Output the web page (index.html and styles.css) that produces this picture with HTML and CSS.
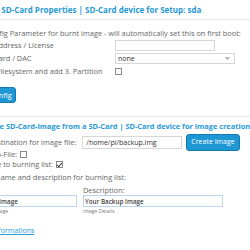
FILE: index.html
```html
<!DOCTYPE html>
<html lang="en">

<head>
	<meta charset="utf-8">
	<meta name="viewport" content="width=device-width, initial-scale=1">
	<link rel="stylesheet" href="styles.css">
</head>

<body>
	<div class="page">
		<section class="panel">
			<h2 class="panel-title">Define SD-Card Properties | SD-Card device for Setup: sda</h2>
			<div class="panel-body">
				<p class="intro">Set Config Parameter for burnt image - will automatically set this on first boot:</p>
				<div class="form-grid">
					<label for="email">Email Address / License</label>
					<input type="text" id="email" class="field">
					<label for="dac">Soundcard / DAC</label>
					<span class="select-wrap">
						<select id="dac" class="field select">
							<option>none</option>
						</select>
					</span>
					<label for="resize">Resize Filesystem and add 3. Partition</label>
					<span><input type="checkbox" id="resize" class="check"></span>
				</div>
				<button type="button" class="btn btn-save">Set Config</button>
			</div>
		</section>

		<section class="panel">
			<h2 class="panel-title">Create SD-Card-Image from a SD-Card | SD-Card device for image creation</h2>
			<div class="panel-body second">
				<div class="line line-first">
					<label for="dest">The Destination for image file:</label>
					<input type="text" id="dest" class="field" value="/home/pi/backup.img">
					<button type="button" class="btn btn-create">Create Image</button>
				</div>
				<div class="line">
					<label for="zip">New Zip-File:</label>
					<input type="checkbox" id="zip" class="check">
				</div>
				<div class="line">
					<label for="addlist">Save file to burning list:</label>
					<input type="checkbox" id="addlist" class="check" checked>
				</div>
				<p class="line line-text">Image name and description for burning list:</p>
				<div class="name-row">
					<div class="name-col">
						<label for="iname">Name:</label>
						<input type="text" id="iname" class="field field-blue" value="Backup Image">
						<small>Set Your Image</small>
					</div>
					<div class="name-col">
						<label for="idesc">Description:</label>
						<input type="text" id="idesc" class="field field-blue" value="Your Backup Image">
						<small>Image Details</small>
					</div>
				</div>
			</div>
		</section>

		<a class="more" href="#">More Informations</a>
	</div>
</body>

</html>
```

FILE: styles.css
```css
* {
	box-sizing: border-box;
}

html,
body {
	margin: 0;
	padding: 0;
	overflow: hidden;
	background-color: #ffffff;
}

body {
	font-family: "Open Sans", "Liberation Sans", sans-serif;
	font-size: 7.4px;
	line-height: 12px;
	color: #666666;
}

.page {
	width: 430px;
	margin-left: -27px;
}

.panel {
	border-bottom: 1px solid #e6e6e6;
}

.panel + .panel {
	border-bottom: none;
}

.panel-title {
	margin: 0;
	padding: 4px 0 3px 0;
	font-size: 8px;
	line-height: 12px;
	font-weight: 700;
	color: #2799d6;
	border-bottom: 1px solid #e6e6e6;
}

.panel + .panel .panel-title {
	padding: 3px 0 0 6.5px;
	font-size: 7.4px;
	border-bottom: none;
}

.panel-body {
	padding: 7px 0 13px 0;
}

.intro {
	margin: 0;
}

.form-grid {
	display: grid;
	grid-template-columns: 142px auto;
	grid-auto-rows: 12px;
	row-gap: 1px;
	align-items: center;
	margin-bottom: 10px;
}

.form-grid > span {
	display: flex;
	align-items: center;
}

.field {
	height: 11px;
	width: 100px;
	padding: 0 3px;
	border: 1px solid #d6d6d6;
	border-radius: 0;
	font-family: inherit;
	font-size: 7px;
	color: #333333;
	background: #ffffff;
	outline: none;
}

.select-wrap {
	position: relative;
	width: 120px;
}

.select {
	width: 120px;
	-webkit-appearance: none;
	appearance: none;
	padding: 0 2px;
	line-height: 9px;
}

.select-wrap::after {
	content: "";
	position: absolute;
	right: 6px;
	top: 3px;
	width: 2px;
	height: 2px;
	border-right: 1px solid #888888;
	border-bottom: 1px solid #888888;
	transform: rotate(45deg);
}

.check {
	-webkit-appearance: none;
	appearance: none;
	position: relative;
	width: 7px;
	height: 7px;
	margin: 0;
	border: 1px solid #888888;
	background: #ffffff;
}

.check:checked::after {
	content: "";
	position: absolute;
	left: 1.5px;
	top: 0;
	width: 2px;
	height: 3.5px;
	border-right: 1px solid #333333;
	border-bottom: 1px solid #333333;
	transform: rotate(40deg);
}

.btn {
	height: 16px;
	padding: 0 3px;
	border: 1px solid #137bb0;
	border-radius: 3px;
	background-color: #1f97d4;
	color: #ffffff;
	font-family: inherit;
	font-size: 7.4px;
	line-height: 14px;
}

.btn-create {
	height: 17px;
	font-size: 7px;
	padding: 0 4px;
}

.second {
	padding: 4px 0 0 0;
}

.line {
	display: flex;
	align-items: center;
	gap: 3px;
	height: 10px;
	margin: 0;
	line-height: 10px;
}

.line-first {
	height: 12px;
	gap: 0;
	margin-bottom: 1px;
}

.line-first label {
	margin-right: 6px;
}

.line-first .field {
	height: 13px;
	flex: none;
}

.line-first .btn {
	flex: none;
	margin-left: 4px;
}

.line-text {
	margin-top: 2px;
	height: 12px;
	line-height: 12px;
}

.name-row {
	display: flex;
	gap: 6px;
	margin-top: 2px;
}

.name-col {
	display: flex;
	flex-direction: column;
	line-height: 10px;
}

.name-col .field {
	width: 104px;
	height: 12px;
	padding: 0 1px;
	font-size: 6.3px;
	font-weight: 600;
	color: #444444;
}

.name-col:last-child .field {
	width: 140px;
}

.field-blue {
	border-color: #bcd5ef;
}

.name-col small {
	font-size: 5px;
	line-height: 7px;
	color: #777777;
	margin-top: 1px;
}

.more {
	display: inline-block;
	margin-top: 10px;
	font-size: 7px;
	line-height: 12px;
	color: #2799d6;
	text-decoration: underline;
}
```
